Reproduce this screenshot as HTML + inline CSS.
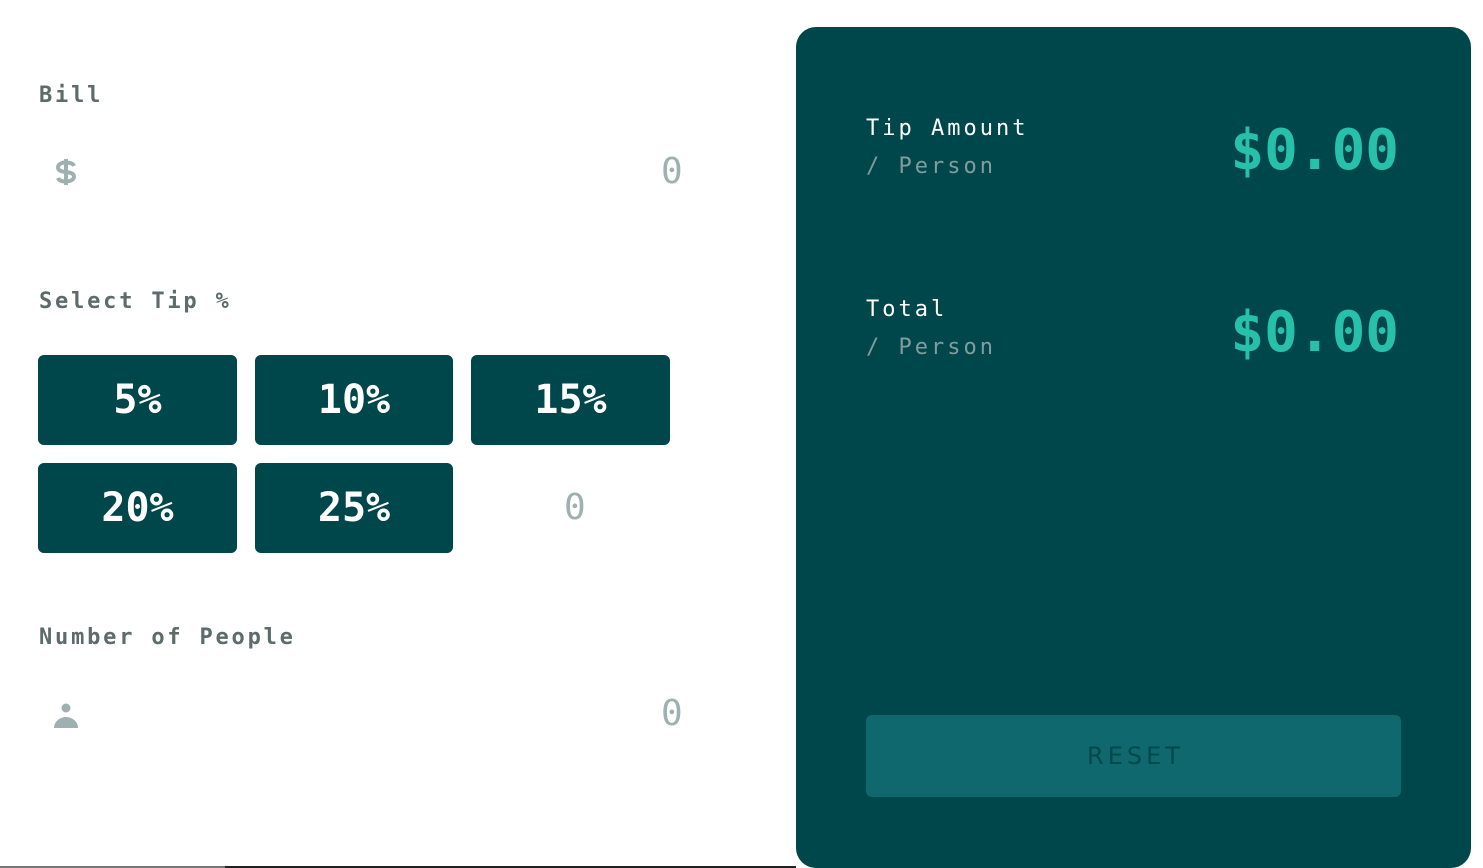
<!DOCTYPE html>
<html><head><meta charset="utf-8"><style>
*{margin:0;padding:0;box-sizing:border-box}
html,body{width:1483px;height:868px}
body{background:#fff;position:relative;overflow:hidden;font-family:"DejaVu Sans Mono","Liberation Mono",monospace}
.lbl{position:absolute;left:39px;font-size:22px;font-weight:bold;letter-spacing:2.8px;color:#5e6b6b}
.in0{position:absolute;font-size:36px;color:#9fb0b0}
.btn{position:absolute;width:199px;height:90px;background:#00474b;border-radius:6px;color:#fff;font-weight:bold;font-size:40px;letter-spacing:0px;display:flex;align-items:center;justify-content:center}
.panel{position:absolute;left:796px;top:27px;width:675px;height:841px;background:#00474b;border-radius:20px}
.t{position:absolute;left:866px;font-size:22px;letter-spacing:3px;color:#fff}
.p{position:absolute;left:866px;font-size:22px;letter-spacing:3px;color:#7f9d9f}
.amt{position:absolute;right:84px;font-size:56px;font-weight:bold;color:#26c0ab}
.reset{position:absolute;left:866px;top:715px;width:535px;height:82px;background:#0f686d;border-radius:6px;color:#02494c;font-family:"DejaVu Sans",sans-serif;font-size:24px;letter-spacing:4px;display:flex;align-items:center;justify-content:center;padding-left:4px}
</style></head><body>
<div class="lbl" style="top:83px">Bill</div>
<svg style="position:absolute;left:53px;top:157px" width="26" height="30" viewBox="0 0 26 30"><path d="M21 9C20 6.5 17 5.5 13 5.5 8 5.5 5 7.5 5 10.5s3 4 8 4.5 8 1.8 8 4.5-3 5-8 5c-4 0-7-1-8-3.5M13 2v26" fill="none" stroke="#9fb0b0" stroke-width="4"/></svg>
<div class="in0" style="left:661px;top:151px">0</div>
<div class="lbl" style="top:289px">Select Tip %</div>
<div class="btn" style="left:38px;top:355px">5%</div>
<div class="btn" style="left:255px;top:355px;width:198px">10%</div>
<div class="btn" style="left:471px;top:355px">15%</div>
<div class="btn" style="left:38px;top:463px">20%</div>
<div class="btn" style="left:255px;top:463px;width:198px">25%</div>
<div class="in0" style="left:564px;top:487px">0</div>
<div class="lbl" style="top:625px">Number of People</div>
<svg style="position:absolute;left:53px;top:702px" width="26" height="27" viewBox="0 0 26 27"><circle cx="13" cy="6" r="4.5" fill="#9fb0b0"/><path d="M1 26a12 11 0 0 1 24 0z" fill="#9fb0b0"/></svg>
<div class="in0" style="left:661px;top:693px">0</div>
<div style="position:absolute;left:0;top:866px;width:225px;height:2px;background:#777"></div>
<div style="position:absolute;left:225px;top:866px;width:571px;height:2px;background:#222"></div>
<div class="panel"></div>
<div class="t" style="top:116px">Tip Amount</div>
<div class="p" style="top:154px">/ Person</div>
<div class="amt" style="top:118px">$0.00</div>
<div class="t" style="top:297px">Total</div>
<div class="p" style="top:335px">/ Person</div>
<div class="amt" style="top:300px">$0.00</div>
<div class="reset">RESET</div>
</body></html>
